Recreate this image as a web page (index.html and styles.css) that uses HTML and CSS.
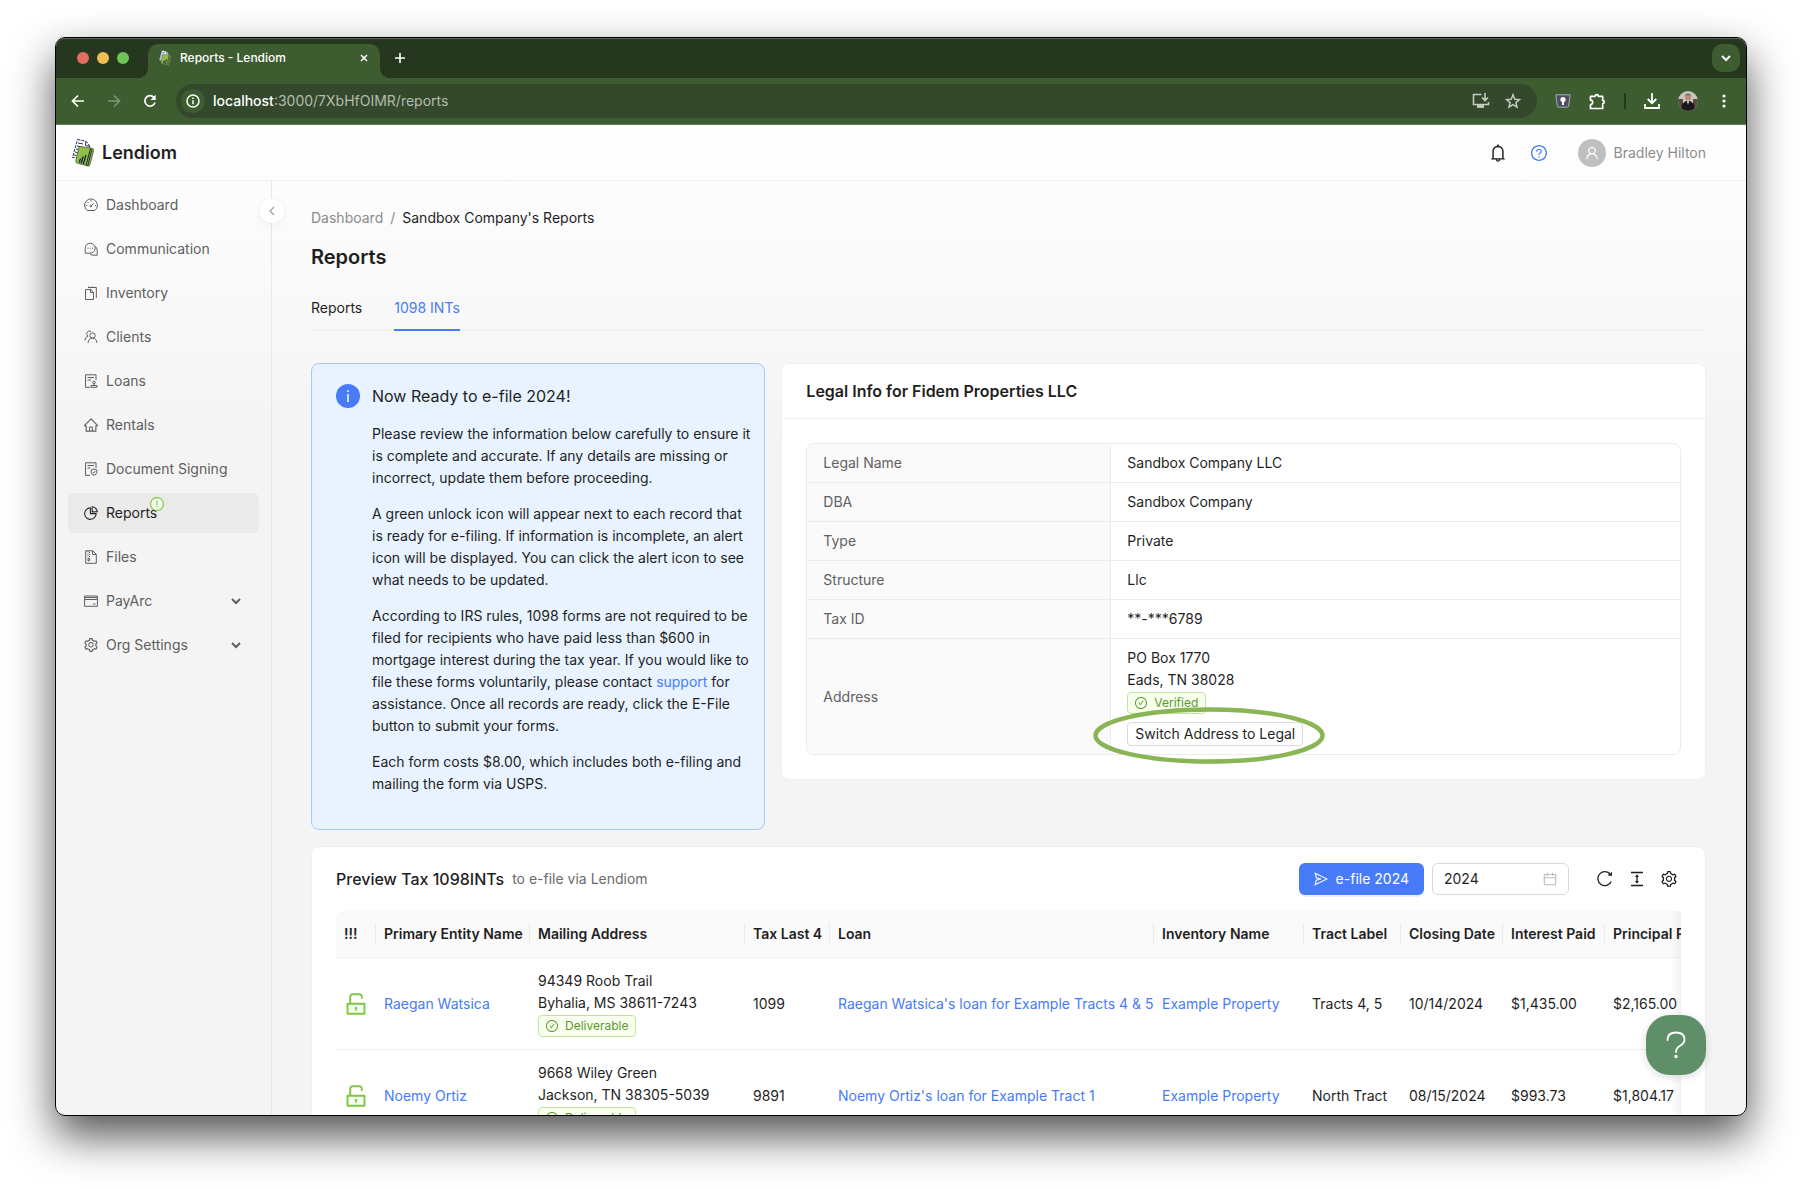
FILE: index.html
```html
<!DOCTYPE html>
<html lang="en">

<head>
  <meta charset="UTF-8">
  <meta name="viewport" content="width=device-width, initial-scale=1.0">
  <title>Reports - Lendiom</title>
  <link rel="stylesheet" href="styles.css">
</head>

<body>
  <!-- shared icons -->
  <svg class="sprite" aria-hidden="true">
    <symbol id="logo" viewBox="0 0 22 28">
      <path d="M5.500.5l9 2 3.500 5-3 12-14.500-1z" fill="#fff" stroke="#2d2f52" stroke-width="1" stroke-dasharray="3 1" />
      <path d="M14 2.500l-.5 4 4.500 1M6 4l5 1M5 7l5 1M4 10l3 .7M3 13l3 .7M2 16l2.500 .5" fill="none" stroke="#2d2f52" stroke-width="1" />
      <path d="M8.500 7.500l12 2q1.500.3 1.200 1.800l-3.700 14.200q-.4 1.800-2 1.500l-11-3q-1.500-.5-1.200-2l3-13q.3-1.700 1.700-1.500z" fill="#8fbf45" stroke="#4b5a3a" stroke-width=".8" />
      <path d="M18.500 9.500L14 26.500M20 10l-4.300 17" stroke="#1d2440" stroke-width="1" />
      <path d="M8.500 19.500l-1.200 4M11.200 17.500l-2 7M14 16l-2.700 9" stroke="#1d2440" stroke-width="1.300" fill="none" />
    </symbol>
    <symbol id="check-circle" viewBox="64 64 896 896">
      <path d="M699 353h-46.9c-10.2 0-19.9 4.9-25.900 13.300L469 584.300l-71.200-98.800c-6-8.300-15.600-13.300-25.900-13.300H325c-6.500 0-10.300 7.400-6.500 12.700l124.600 172.800a31.800 31.800 0 0051.700 0l210.600-292c3.900-5.300.1-12.700-6.400-12.700z" />
      <path d="M512 64C264.600 64 64 264.600 64 512s200.600 448 448 448 448-200.600 448-448S759.400 64 512 64zm0 820c-205.400 0-372-166.600-372-372s166.600-372 372-372 372 166.600 372 372-166.600 372-372 372z" />
    </symbol>
    <symbol id="unlock" viewBox="64 64 896 896">
      <path d="M232 536h560v304H232z" fill="#f6ffed" />
      <path d="M832 464H332V240c0-30.900 25.100-56 56-56h248c30.900 0 56 25.100 56 56v68c0 4.400 3.600 8 8 8h56c4.400 0 8-3.600 8-8v-68c0-70.700-57.300-128-128-128H388c-70.700 0-128 57.300-128 128v224h-68c-17.700 0-32 14.300-32 32v384c0 17.700 14.300 32 32 32h640c17.700 0 32-14.300 32-32V496c0-17.700-14.300-32-32-32zm-40 376H232V536h560v304zM484 701v53c0 4.400 3.600 8 8 8h40c4.400 0 8-3.600 8-8v-53a48.010 48.010 0 10-56 0z" />
    </symbol>
    <symbol id="setting" viewBox="64 64 896 896">
      <path d="M924.8 625.7l-65.5-56c3.1-19 4.7-38.4 4.7-57.8s-1.6-38.8-4.7-57.8l65.5-56a32.03 32.03 0 009.3-35.2l-.9-2.6a443.74 443.74 0 00-79.7-137.9l-1.8-2.1a32.12 32.12 0 00-35.1-9.5l-81.3 28.9c-30-24.6-63.5-44-99.7-57.6l-15.7-85a32.05 32.05 0 00-25.8-25.7l-2.7-.5c-52.1-9.4-106.9-9.4-159 0l-2.7.5a32.05 32.05 0 00-25.8 25.7l-15.8 85.4a351.86 351.86 0 00-99 57.4l-81.9-29.1a32 32 0 00-35.1 9.5l-1.8 2.1a446.02 446.02 0 00-79.7 137.9l-.9 2.6c-4.5 12.5-.8 26.5 9.3 35.2l66.3 56.6c-3.1 18.8-4.6 38-4.6 57.1 0 19.2 1.5 38.4 4.6 57.1L99 625.5a32.03 32.03 0 00-9.3 35.2l.9 2.6c18.1 50.4 44.9 96.9 79.7 137.9l1.8 2.1a32.12 32.12 0 0035.1 9.5l81.9-29.1c29.8 24.5 63.1 43.9 99 57.4l15.8 85.4a32.05 32.05 0 0025.8 25.7l2.7.5a449.4 449.4 0 00159 0l2.7-.5a32.05 32.05 0 0025.8-25.7l15.7-85a350 350 0 0099.7-57.6l81.3 28.9a32 32 0 0035.1-9.5l1.8-2.1c34.8-41.1 61.6-87.5 79.7-137.9l.9-2.6c4.5-12.3.8-26.3-9.3-35zM788.3 465.9c2.5 15.1 3.8 30.6 3.8 46.1s-1.3 31-3.8 46.1l-6.6 40.1 74.7 63.9a370.03 370.03 0 01-42.6 73.6L721 702.8l-31.4 25.8c-23.9 19.6-50.5 35-79.3 45.8l-38.1 14.3-17.9 97a377.5 377.5 0 01-85 0l-17.9-97.2-37.8-14.5c-28.500-10.8-55-26.2-78.7-45.7l-31.4-25.9-93.4 33.2c-17-22.9-31.2-47.6-42.6-73.6l75.5-64.5-6.5-40c-2.4-14.9-3.7-30.3-3.7-45.5 0-15.3 1.2-30.6 3.7-45.5l6.5-40-75.5-64.5c11.3-26.1 25.6-50.7 42.6-73.6l93.4 33.2 31.4-25.9c23.7-19.5 50.2-34.9 78.7-45.7l37.9-14.3 17.9-97.2c28.1-3.2 56.8-3.2 85 0l17.9 97 38.1 14.3c28.7 10.8 55.4 26.2 79.3 45.8l31.4 25.8 92.8-32.9c17 22.9 31.2 47.6 42.6 73.6L781.8 426l6.5 39.9zM512 326c-97.2 0-176 78.8-176 176s78.8 176 176 176 176-78.8 176-176-78.8-176-176-176zm79.200 255.200A111.600 111.600 0 01512 614c-29.900 0-58-11.700-79.200-32.800A111.600 111.600 0 01400 502c0-29.900 11.700-58 32.800-79.200C454 401.600 482.100 390 512 390c29.900 0 58 11.600 79.200 32.800A111.600 111.600 0 01624 502c0 29.900-11.700 58-32.800 79.200z" />
    </symbol>
    <symbol id="chevron" viewBox="0 0 10 10">
      <path d="M1 3l4 4 4-4" fill="none" stroke="currentColor" stroke-width="2" />
    </symbol>
  </svg>

  <div class="window">
    <!-- browser tabs -->
    <div class="tab-strip">
      <div class="lights">
        <span class="light red"></span>
        <span class="light yellow"></span>
        <span class="light green"></span>
      </div>
      <div class="browser-tab">
        <svg class="favicon"><use href="#logo" /></svg>
        <span class="browser-tab-title">Reports - Lendiom</span>
        <button class="chrome-btn" aria-label="Close tab">
          <svg width="8" height="8" viewBox="0 0 8 8"><path d="M1 1l6 6M7 1L1 7" stroke="#fff" stroke-width="1.500" /></svg>
        </button>
      </div>
      <button class="chrome-btn new-tab" aria-label="New tab">
        <svg width="12" height="12" viewBox="0 0 12 12"><path d="M6 1v10M1 6h10" stroke="#fff" stroke-width="1.600" /></svg>
      </button>
      <button class="tab-search" aria-label="Search tabs">
        <svg width="10" height="10"><use href="#chevron" /></svg>
      </button>
    </div>

    <!-- address bar -->
    <div class="toolbar">
      <div class="nav-buttons">
        <button class="chrome-btn" aria-label="Back">
          <svg width="14" height="14" viewBox="0 0 14 14"><path d="M13 7H2M7 1.500L1.500 7 7 12.500" fill="none" stroke="#fff" stroke-width="1.700" /></svg>
        </button>
        <button class="chrome-btn" aria-label="Forward">
          <svg width="14" height="14" viewBox="0 0 14 14"><path d="M1 7h11M7 1.500L12.500 7 7 12.500" fill="none" stroke="#7f9576" stroke-width="1.700" /></svg>
        </button>
        <button class="chrome-btn" aria-label="Reload">
          <svg width="14" height="14" viewBox="0 0 14 14"><path d="M12 8.500A5.200 5.200 0 1 1 11 3.500" fill="none" stroke="#fff" stroke-width="1.700" /><path d="M12.700.8v5.200H7.500z" fill="#fff" /></svg>
        </button>
      </div>
      <div class="omnibox">
        <button class="site-info" aria-label="Site information">
          <svg width="14" height="14" viewBox="0 0 14 14"><circle cx="7" cy="7" r="6" fill="none" stroke="#fff" stroke-width="1.500" /><path d="M7 6.200v4M7 3.500v1.500" stroke="#fff" stroke-width="1.500" /></svg>
        </button>
        <div class="url" role="textbox" contenteditable="true" spellcheck="false" aria-label="Address"><b>localhost</b>:3000/7XbHfOIMR/reports</div>
        <button class="chrome-btn" aria-label="Install app">
          <svg width="18" height="16" viewBox="0 0 18 16"><path d="M9.500 1.500h-8v10h15V9M5 14h7M13 0v7M10 4.500l3 3 3-3" fill="none" stroke="#c3cbbf" stroke-width="1.600" /><path d="M5 12h7v2.500H5z" fill="#c3cbbf" /></svg>
        </button>
        <button class="chrome-btn" aria-label="Bookmark">
          <svg width="16" height="16" viewBox="0 0 16 16"><path d="M8 1.800l1.800 4.400 4.700.4-3.600 3 1.100 4.600L8 11.700l-4 2.500 1.100-4.600-3.600-3 4.700-.4z" fill="none" stroke="#c3cbbf" stroke-width="1.500" /></svg>
        </button>
      </div>
      <div class="extensions">
        <button class="chrome-btn" aria-label="Password manager">
          <svg width="16" height="14" viewBox="0 0 16 14"><path d="M.8.800h14.400l-1.500 11.200q-.2 1.200-1.500 1.200H3.800q-1.300 0-1.500-1.200z" fill="#4b4f5e" stroke="#a9adb8" /><circle cx="8" cy="5.500" r="2.600" fill="#fff" /><path d="M7 6h2v5H7z" fill="#fff" /></svg>
        </button>
        <button class="chrome-btn" aria-label="Extensions">
          <svg width="17" height="17" viewBox="0 0 17 17"><path d="M1.500 3.300h4.700a1.600 1.600 0 0 1 3.200 0h4.300v4.200a1.600 1.600 0 0 1 0 3.200v4.800H1.500v-4a2 2 0 0 0 0-4.400z" fill="none" stroke="#fff" stroke-width="1.700" stroke-linejoin="round" /></svg>
        </button>
        <span class="divider"></span>
        <button class="chrome-btn" aria-label="Downloads">
          <svg width="16" height="16" viewBox="0 0 16 16"><path d="M8 0v10M3.700 6L8 10.200 12.300 6M1 11v4h14v-4" fill="none" stroke="#fff" stroke-width="1.800" /></svg>
        </button>
        <button class="chrome-btn" aria-label="Profile">
          <svg width="20" height="20" viewBox="0 0 20 20">
            <clipPath id="round"><circle cx="10" cy="10" r="10" /></clipPath>
            <g clip-path="url(#round)">
              <path d="M0 0h20v20H0z" fill="#c9c3bd" />
              <path d="M0 8h5v12H0zM15 8h5v12h-5z" fill="#5c4a40" />
              <path d="M3 20l1-7 4-3h4l4 3 1 7z" fill="#17191d" />
              <path d="M9 10h2l-1 4z" fill="#eee" />
              <circle cx="10" cy="6.500" r="3" fill="#b98f7a" />
              <path d="M7 5.500q0-3 3-3t3 3l-1-1H8z" fill="#777" />
            </g>
          </svg>
        </button>
        <button class="chrome-btn browser-menu" aria-label="Menu">
          <svg width="4" height="14" viewBox="0 0 4 14"><circle cx="2" cy="2" r="1.600" fill="#fff" /><circle cx="2" cy="7" r="1.600" fill="#fff" /><circle cx="2" cy="12" r="1.600" fill="#fff" /></svg>
        </button>
      </div>
    </div>

    <!-- app header -->
    <header class="header">
      <a class="brand" href="#">
        <svg width="22" height="28"><use href="#logo" /></svg>
        Lendiom
      </a>
      <div class="header-actions">
        <button class="icon-btn" aria-label="Notifications">
          <svg class="icon-18" viewBox="64 64 896 896"><path d="M816 768h-24V428c0-141.100-104.300-257.700-240-277.100V112c0-22.100-17.900-40-40-40s-40 17.900-40 40v38.900c-135.700 19.400-240 136-240 277.100v340h-24c-17.700 0-32 14.300-32 32v32c0 4.400 3.600 8 8 8h216c0 61.800 50.200 112 112 112s112-50.200 112-112h216c4.400 0 8-3.600 8-8v-32c0-17.700-14.300-32-32-32zM512 888c-26.500 0-48-21.500-48-48h96c0 26.500-21.500 48-48 48zM304 768V428c0-55.600 21.600-107.800 60.900-147.100S456.400 220 512 220c55.600 0 107.800 21.600 147.100 60.900S720 372.400 720 428v340H304z" /></svg>
        </button>
        <button class="icon-btn help" aria-label="Help">
          <svg class="icon-16" viewBox="64 64 896 896"><path d="M512 64C264.600 64 64 264.600 64 512s200.600 448 448 448 448-200.600 448-448S759.400 64 512 64zm0 820c-205.400 0-372-166.600-372-372s166.600-372 372-372 372 166.600 372 372-166.600 372-372 372z" /><path d="M623.600 316.700C593.600 290.400 554 276 512 276s-81.600 14.500-111.600 40.700C369.200 344 352 380.700 352 420v7.600c0 4.400 3.600 8 8 8h48c4.400 0 8-3.600 8-8V420c0-44.100 43.100-80 96-80s96 35.900 96 80c0 31.100-22 59.600-56.100 72.700-21.200 8.100-39.200 22.300-52.100 40.900-13.100 19-19.900 41.800-19.900 64.900V620c0 4.400 3.600 8 8 8h48c4.400 0 8-3.600 8-8v-22.700a48.300 48.300 0 0130.900-44.800c59-22.700 97.100-74.700 97.100-132.500.1-39.300-17.100-76-48.300-103.300zM472 732a40 40 0 1080 0 40 40 0 10-80 0z" /></svg>
        </button>
        <a class="user" href="#">
          <span class="avatar">
            <svg class="icon-14" viewBox="64 64 896 896"><path d="M858.5 763.600a374 374 0 00-80.600-119.500 375.630 375.630 0 00-119.500-80.600c-.4-.2-.8-.3-1.200-.5C719.500 518 760 444.700 760 362c0-137-111-248-248-248S264 225 264 362c0 82.700 40.500 156 102.800 201.100-.4.2-.8.3-1.200.5-44.800 18.900-85 46-119.500 80.600a375.630 375.630 0 00-80.600 119.500A371.700 371.700 0 00136 901.800a8 8 0 008 8.200h60c4.400 0 7.900-3.500 8-7.800 2-77.200 33-149.500 87.800-204.300 56.700-56.700 132-87.900 212.200-87.900s155.500 31.200 212.200 87.900C779 752.700 810 825 812 902.200c.1 4.400 3.600 7.800 8 7.800h60a8 8 0 008-8.200c-1-47.800-10.900-94.300-29.500-138.200zM512 534c-45.900 0-89.100-17.900-121.600-50.400S340 407.900 340 362c0-45.900 17.900-89.100 50.400-121.600S466.100 190 512 190s89.100 17.900 121.600 50.400S684 316.100 684 362c0 45.900-17.900 89.100-50.400 121.600S557.900 534 512 534z" /></svg>
          </span>
          Bradley Hilton
        </a>
      </div>
    </header>

    <div class="layout">
      <!-- sidebar menu -->
      <nav class="sidebar">
        <a class="menu-item" href="#">
          <svg class="icon-line" viewBox="0 0 14 14"><path d="M3.200 12.500A6.400 6.400 0 1 1 10.800 12.500z" /><path d="M7 8l2.700-2.700M7 2.200v1.300M2 7.500h1.200M10.800 7.500H12M3.500 4l.8.8" /><circle cx="6.800" cy="8" r=".8" /></svg>
          Dashboard
        </a>
        <a class="menu-item" href="#">
          <svg class="icon-line" viewBox="0 0 14 14"><path d="M1.200 10.800V6.200a5 5 0 1 1 5 5H1.200zM11 4.300a4.600 4.600 0 0 1 2.200 4v4.900H9a4.500 4.500 0 0 1-3.300-1.600" /><path d="M3.500 6.200h1M5.700 6.200h1M7.900 6.200h1" /></svg>
          Communication
        </a>
        <a class="menu-item" href="#">
          <svg class="icon-line" viewBox="0 0 14 14"><path d="M1.500 3.500h5.300L9.500 6.200v7.300h-8zM6.500 3.500v3h3M4.500 1.500v-1M8.500 1.500v-1M4 1.500h8.300v10.500" /></svg>
          Inventory
        </a>
        <a class="menu-item" href="#">
          <svg class="icon-line" viewBox="0 0 14 14"><circle cx="8.500" cy="5.500" r="2.700" /><path d="M4 13q.5-4.800 4.500-4.800T13 13M7 1.500a2.700 2.700 0 1 0-3 4.700M.8 10.500Q1.200 6.800 4 6.300" /></svg>
          Clients
        </a>
        <a class="menu-item" href="#">
          <svg class="icon-line" viewBox="0 0 14 14"><path d="M6 13.300H1.500V.8h10.500V6M3.500 3.500h6.500M3.500 6h3.500M7 13.300v-1.800h6v1.800zM10 11.500V10" /><circle cx="10" cy="8.500" r="1.300" /></svg>
          Loans
        </a>
        <a class="menu-item" href="#">
          <svg class="icon-14" viewBox="64 64 896 896"><path d="M946.500 505L560.100 118.800l-25.900-25.900a31.500 31.500 0 00-44.400 0L77.500 505a63.900 63.900 0 00-18.800 46c.4 35.200 29.700 63.300 64.900 63.300h42.500V940h691.800V614.300h43.400c17.100 0 33.200-6.700 45.300-18.800a63.600 63.600 0 0018.700-45.300c0-17-6.700-33.100-18.800-45.200zM568 868H456V664h112v204zm217.900-325.700V868H632V640c0-22.100-17.900-40-40-40H432c-22.100 0-40 17.900-40 40v228H238.100V542.300h-96l370-369.700 23.100 23.100L882 542.300h-96.100z" /></svg>
          Rentals
        </a>
        <a class="menu-item" href="#">
          <svg class="icon-line" viewBox="0 0 14 14"><path d="M6 13.300H1.500V.8h10.500V6M3.500 3.500h6.500M3.500 6h3M10 7l2.800 1v2.500q0 1.800-2.800 2.800-2.800-1-2.800-2.800V8z" /><path d="M8.800 10l.9 1 1.600-2" /></svg>
          Document Signing
        </a>
        <a class="menu-item active" href="#">
          <svg class="icon-14" viewBox="64 64 896 896"><path d="M864 518H506V160c0-4.400-3.600-8-8-8h-26a398.460 398.460 0 00-282.800 117.100 398.190 398.190 0 00-85.700 127.100A397.610 397.610 0 0072 552a398.460 398.460 0 00117.100 282.800c36.700 36.700 79.500 65.600 127.100 85.700A397.610 397.610 0 00472 952a398.460 398.460 0 00282.800-117.100c36.700-36.700 65.600-79.500 85.700-127.100A397.610 397.610 0 00872 552v-26c0-4.400-3.600-8-8-8zM705.700 787.800A331.590 331.590 0 01470.400 884c-88.100-.4-170.900-34.900-233.200-97.200C174.500 724.100 140 640.700 140 552c0-88.700 34.500-172.100 97.200-234.800 54.600-54.600 124.900-87.900 200.800-95.500V586h364.300c-7.700 76.300-41.300 147-96.600 201.800zM952 462.400l-2.600-28.200c-8.500-92.100-49.400-179-115.200-244.600A399.400 399.400 0 00589 74.600L560.700 72c-4.700-.4-8.700 3.200-8.700 7.900V464c0 4.400 3.600 8 8 8l384-1c4.700 0 8.400-4 8-8.600zm-332.200-58.200V147.600a332.240 332.240 0 01166.400 89.800c45.700 45.600 77 103.600 90 166.100l-256.400.7z" /></svg>
          <span class="badge-wrap">Reports
            <svg class="badge" viewBox="0 0 14 14"><circle cx="7" cy="7" r="6.400" fill="#f6ffed" stroke="#7cc644" stroke-width="1.100" /><path d="M7 3.500v4.700M7 9.300v1.300" stroke="#7cc644" stroke-width="1.200" /></svg>
          </span>
        </a>
        <a class="menu-item" href="#">
          <svg class="icon-line" viewBox="0 0 14 14"><path d="M1.700.8h7L12.300 4.300v9H1.700zM8.500.8v3.700h3.800" /><path d="M4 1v6.500M5.500 2v6" stroke-dasharray="1 1" /><path d="M4 8.500h1.600v2.300H4z" /></svg>
          Files
        </a>
        <button class="menu-item">
          <svg class="icon-line" viewBox="0 0 14 14"><path d="M.6 2h12.800v10.300H.6zM.6 3.500h12.800M.6 5.500h12.800M9 10h2.500" /></svg>
          PayArc
          <svg class="arrow"><use href="#chevron" /></svg>
        </button>
        <button class="menu-item">
          <svg class="icon-14"><use href="#setting" /></svg>
          Org Settings
          <svg class="arrow"><use href="#chevron" /></svg>
        </button>
        <button class="collapse" aria-label="Collapse menu">
          <svg width="8" height="10" viewBox="0 0 8 10"><path d="M6 1L2 5l4 4" fill="none" stroke="#a0a0a0" stroke-width="1.200" /></svg>
        </button>
      </nav>

      <main class="content">
        <div class="breadcrumb"><a href="#">Dashboard</a><span class="slash">/</span><span class="current">Sandbox Company's Reports</span></div>
        <h1>Reports</h1>
        <div class="tabs" role="tablist">
          <button class="tab" role="tab" aria-selected="false">Reports</button>
          <button class="tab selected" role="tab" aria-selected="true">1098 INTs</button>
        </div>

        <div class="row">
          <!-- e-file notice -->
          <section class="alert">
            <svg class="alert-icon" viewBox="0 0 24 24"><circle cx="12" cy="12" r="12" fill="#477bf8" /><path d="M12 10v8M12 6.200v1.900" stroke="#e8f3ff" stroke-width="1.700" /></svg>
            <div class="alert-body">
              <h2>Now Ready to e-file 2024!</h2>
              <p>Please review the information below carefully to ensure it is complete and accurate. If any details are missing or incorrect, update them before proceeding.</p>
              <p>A green unlock icon will appear next to each record that is ready for e-filing. If information is incomplete, an alert icon will be displayed. You can click the alert icon to see what needs to be updated.</p>
              <p>According to IRS rules, 1098 forms are not required to be filed for recipients who have paid less than $600 in mortgage interest during the tax year. If you would like to file these forms voluntarily, please contact <a href="#">support</a> for assistance. Once all records are ready, click the E-File button to submit your forms.</p>
              <p>Each form costs $8.00, which includes both e-filing and mailing the form via USPS.</p>
            </div>
          </section>

          <!-- legal info -->
          <section class="card legal">
            <h2 class="card-title">Legal Info for Fidem Properties LLC</h2>
            <div class="card-body">
              <table class="descriptions">
                <tr><th scope="row">Legal Name</th><td>Sandbox Company LLC</td></tr>
                <tr><th scope="row">DBA</th><td>Sandbox Company</td></tr>
                <tr><th scope="row">Type</th><td>Private</td></tr>
                <tr><th scope="row">Structure</th><td>Llc</td></tr>
                <tr><th scope="row">Tax ID</th><td>**-***6789</td></tr>
                <tr>
                  <th scope="row">Address</th>
                  <td>
                    PO Box 1770<br>Eads, TN 38028
                    <div class="tag-line"><span class="tag"><svg class="icon-12"><use href="#check-circle" /></svg>Verified</span></div>
                    <div class="switch-wrap">
                      <button class="small-btn">Switch Address to Legal</button>
                      <svg class="highlight" viewBox="0 0 232 57" preserveAspectRatio="none"><ellipse cx="116" cy="28.500" rx="113.500" ry="26" fill="none" stroke="#8ab555" stroke-width="4.500" /></svg>
                    </div>
                  </td>
                </tr>
              </table>
            </div>
          </section>
        </div>

        <!-- 1098 preview table -->
        <section class="card preview">
          <div class="preview-bar">
            <h2>Preview Tax 1098INTs</h2>
            <span class="subtitle">to e-file via Lendiom</span>
            <button class="primary-btn">
              <svg width="14" height="14" viewBox="0 0 14 14"><path d="M1.200 1.200L13 7 1.200 12.800 2.300 8.200 7 7 2.300 5.800z" fill="none" stroke="#fff" stroke-width="1.100" /></svg>
              e-file 2024
            </button>
            <div class="picker">
              <input type="text" value="2024" aria-label="Tax year">
              <svg class="icon-14" viewBox="64 64 896 896"><path d="M880 184H712v-64c0-4.400-3.600-8-8-8h-56c-4.400 0-8 3.600-8 8v64H384v-64c0-4.400-3.600-8-8-8h-56c-4.400 0-8 3.600-8 8v64H144c-17.700 0-32 14.300-32 32v664c0 17.700 14.300 32 32 32h736c17.700 0 32-14.300 32-32V216c0-17.700-14.300-32-32-32zm-40 656H184V460h656v380zM184 392V256h128v48c0 4.400 3.600 8 8 8h56c4.400 0 8-3.600 8-8v-48h256v48c0 4.400 3.600 8 8 8h56c4.400 0 8-3.600 8-8v-48h128v136H184z" /></svg>
            </div>
            <div class="table-tools">
              <button class="icon-btn" aria-label="Reload">
                <svg width="16" height="16" viewBox="0 0 16 16"><path d="M14.300 10.500A7 7 0 1 1 13.500 3.500M14.500 1.300l-.3 3-3-.5" fill="none" stroke="currentColor" stroke-width="1.300" /></svg>
              </button>
              <button class="icon-btn" aria-label="Density">
                <svg width="16" height="16" viewBox="0 0 16 16"><path d="M2 1.500h12M2 14.500h12M8 5v6" stroke="currentColor" stroke-width="1.300" /><path d="M8 3.300L10 6H6zM8 12.700L6 10h4z" fill="currentColor" /></svg>
              </button>
              <button class="icon-btn" aria-label="Column settings">
                <svg class="icon-16"><use href="#setting" /></svg>
              </button>
            </div>
          </div>
          <div class="table-wrap">
            <table class="records">
              <colgroup>
                <col class="w-status"><col class="w-name"><col class="w-address"><col class="w-tax"><col class="w-loan">
                <col class="w-inventory"><col class="w-tract"><col class="w-date"><col class="w-date"><col class="w-principal">
              </colgroup>
              <thead>
                <tr>
                  <th>!!!</th>
                  <th>Primary Entity Name</th>
                  <th>Mailing Address</th>
                  <th>Tax Last 4</th>
                  <th>Loan</th>
                  <th>Inventory Name</th>
                  <th>Tract Label</th>
                  <th>Closing Date</th>
                  <th>Interest Paid</th>
                  <th>Principal Paid</th>
                </tr>
              </thead>
              <tbody>
                <tr>
                  <td><svg class="unlock"><use href="#unlock" /></svg></td>
                  <td><a href="#">Raegan Watsica</a></td>
                  <td>94349 Roob Trail<br>Byhalia, MS 38611-7243<div class="tag-line"><span class="tag"><svg class="icon-12"><use href="#check-circle" /></svg>Deliverable</span></div></td>
                  <td>1099</td>
                  <td><a href="#">Raegan Watsica's loan for Example Tracts 4 &amp; 5</a></td>
                  <td><a href="#">Example Property</a></td>
                  <td>Tracts 4, 5</td>
                  <td>10/14/2024</td>
                  <td>$1,435.00</td>
                  <td>$2,165.00</td>
                </tr>
                <tr>
                  <td><svg class="unlock"><use href="#unlock" /></svg></td>
                  <td><a href="#">Noemy Ortiz</a></td>
                  <td>9668 Wiley Green<br>Jackson, TN 38305-5039<div class="tag-line"><span class="tag"><svg class="icon-12"><use href="#check-circle" /></svg>Deliverable</span></div></td>
                  <td>9891</td>
                  <td><a href="#">Noemy Ortiz's loan for Example Tract 1</a></td>
                  <td><a href="#">Example Property</a></td>
                  <td>North Tract</td>
                  <td>08/15/2024</td>
                  <td>$993.73</td>
                  <td>$1,804.17</td>
                </tr>
              </tbody>
            </table>
          </div>
        </section>
      </main>
    </div>

    <button class="help-fab" aria-label="Support">
      <svg width="20" height="28" viewBox="0 0 20 28"><path d="M1.500 9Q1.500 1.500 10 1.500T18.500 8.500Q18.500 12 14.500 14.500 10 17 10 21" fill="none" stroke="#fff" stroke-width="1.800" stroke-linecap="round" /><circle cx="10" cy="25.500" r="1.700" fill="#fff" /></svg>
    </button>
  </div>
</body>

</html>
```

FILE: styles.css
```css
* {
  box-sizing: border-box;
}

body {
  margin: 0;
  height: 100vh;
  padding: 37px 55px 73px;
  background: #fff;
  color: #1f1f1f;
  font-family: Inter, "Liberation Sans", sans-serif;
  font-size: 14px;
  line-height: 22px;
}

h1,
h2,
p {
  margin: 0;
}

button {
  padding: 0;
  border: none;
  background: none;
  color: inherit;
  font: inherit;
  cursor: pointer;
}

a {
  color: #477bf8;
  text-decoration: none;
}

svg {
  display: block;
  flex: none;
  fill: currentColor;
}

.sprite {
  position: absolute;
  width: 0;
  height: 0;
}

.icon-12 {
  width: 12px;
  height: 12px;
}

.icon-14,
.icon-line {
  width: 14px;
  height: 14px;
}

.icon-16 {
  width: 16px;
  height: 16px;
}

.icon-18 {
  width: 18px;
  height: 18px;
}

.icon-line {
  fill: none;
  stroke: currentColor;
  stroke-width: 1;
}

/* window */
.window {
  position: relative;
  display: flex;
  flex-direction: column;
  height: 100%;
  border: 1px solid #000;
  border-radius: 10px;
  background: linear-gradient(#fff 80px, #f4f4f4 400px);
  box-shadow: 0 20px 44px rgba(0, 0, 0, 0.68);
  overflow: hidden;
}

.tab-strip {
  display: flex;
  align-items: center;
  flex: none;
  height: 40px;
  padding: 0 6px 0 21px;
  background: #26371f;
  box-shadow: inset 0 1px #5b6856;
}

.lights {
  display: flex;
  gap: 8px;
}

.light {
  width: 12px;
  height: 12px;
  border-radius: 50%;
}

.red {
  background: #e36d5f;
}

.yellow {
  background: #f0be50;
}

.green {
  background: #6fc556;
}

.browser-tab {
  position: relative;
  display: flex;
  align-items: center;
  align-self: flex-end;
  gap: 8px;
  width: 232px;
  height: 34px;
  margin-left: 19px;
  padding: 0 12px 6px 10px;
  border-radius: 10px 10px 0 0;
  background: #3d5c30;
  color: #fff;
  font-size: 12px;
  font-weight: 500;
}

/* curved feet of the active tab */
.browser-tab::before,
.browser-tab::after {
  content: "";
  position: absolute;
  bottom: 0;
  width: 10px;
  height: 10px;
}

.browser-tab::before {
  right: 100%;
  background: radial-gradient(circle at 0 0, transparent 10px, #3d5c30 10px);
}

.browser-tab::after {
  left: 100%;
  background: radial-gradient(circle at 100% 0, transparent 10px, #3d5c30 10px);
}

.favicon {
  width: 14px;
  height: 16px;
}

.browser-tab-title {
  flex: 1;
}

.chrome-btn {
  display: flex;
  align-items: center;
  justify-content: center;
}

.new-tab {
  margin-left: 14px;
}

.tab-search {
  display: flex;
  align-items: center;
  justify-content: center;
  width: 28px;
  height: 28px;
  margin-left: auto;
  border-radius: 10px;
  background: #3d5c30;
  color: #fff;
}

.toolbar {
  display: flex;
  align-items: center;
  flex: none;
  height: 47px;
  padding: 0 14px 0 15px;
  border-bottom: 1px solid #66805c;
  background: #3d5c30;
}

.nav-buttons {
  display: flex;
  gap: 22px;
  margin-right: 19px;
}

.omnibox {
  display: flex;
  align-items: center;
  flex: 1;
  gap: 15px;
  height: 34px;
  padding: 0 16px 0 5px;
  border-radius: 17px;
  background: #34482c;
}

.site-info {
  display: flex;
  align-items: center;
  justify-content: center;
  width: 24px;
  height: 24px;
  border-radius: 50%;
  background: #3d5c30;
}

.url {
  flex: 1;
  margin-left: -7px;
  color: #b3bbae;
  outline: none;
}

.url b {
  color: #fff;
  font-weight: 500;
}

.extensions {
  display: flex;
  align-items: center;
  gap: 18px;
  margin-left: 18px;
}

.browser-menu {
  width: 16px;
}

.divider {
  width: 2px;
  height: 16px;
  background: #26371f;
}

/* app header */
.header {
  display: flex;
  align-items: center;
  justify-content: space-between;
  flex: none;
  height: 56px;
  padding: 0 40px 0 16px;
  border-bottom: 1px solid #eee;
}

.brand {
  display: flex;
  align-items: center;
  gap: 8px;
  color: #1f1f1f;
  font-size: 18px;
  font-weight: 600;
}

.header-actions {
  display: flex;
  align-items: center;
  gap: 17px;
}

.icon-btn {
  display: flex;
  align-items: center;
  justify-content: center;
  width: 24px;
  height: 24px;
}

.help {
  color: #477bf8;
}

.user {
  display: flex;
  align-items: center;
  gap: 8px;
  margin-left: 10px;
  color: #8c8c8c;
}

.avatar {
  display: flex;
  align-items: center;
  justify-content: center;
  width: 28px;
  height: 28px;
  border-radius: 50%;
  background: #bfbfbf;
  color: #fff;
}

.layout {
  display: flex;
  flex: 1;
  min-height: 0;
}

/* sidebar */
.sidebar {
  position: relative;
  display: flex;
  flex-direction: column;
  flex: none;
  gap: 4px;
  width: 216px;
  padding: 4px 12px;
  border-right: 1px solid #e8e8e8;
}

.menu-item {
  display: flex;
  align-items: center;
  gap: 8px;
  height: 40px;
  padding: 0 16px;
  border-radius: 6px;
  color: #5e5e5e;
}

.menu-item.active {
  background: #eaeaea;
  color: #1f1f1f;
}

.badge-wrap {
  position: relative;
}

.badge {
  position: absolute;
  top: -5px;
  right: -7px;
  width: 14px;
  height: 14px;
}

.arrow {
  width: 10px;
  height: 10px;
  margin: 0 2px 0 auto;
}

.collapse {
  position: absolute;
  top: 18px;
  right: -13px;
  display: flex;
  align-items: center;
  justify-content: center;
  width: 24px;
  height: 24px;
  border-radius: 50%;
  background: #fff;
  box-shadow: 0 2px 8px rgba(0, 0, 0, 0.06);
}

/* content */
.content {
  flex: 1;
  min-width: 0;
  padding: 26px 40px 0 39px;
  overflow: hidden;
}

.breadcrumb a,
.slash {
  color: #8c8c8c;
}

.slash {
  margin: 0 7px;
}

h1 {
  margin: 12px 0;
  font-size: 20px;
  font-weight: 600;
  line-height: 32px;
}

.tabs {
  display: flex;
  gap: 32px;
  box-shadow: inset 0 -1px #ececec;
}

.tab {
  height: 46px;
}

.tab.selected {
  border-bottom: 2px solid #477bf8;
  border-top: 2px solid transparent;
  color: #477bf8;
}

.row {
  display: grid;
  grid-template-columns: repeat(3, minmax(0, 1fr));
  align-items: start;
  gap: 16px;
  margin: 32px 0 16px;
}

.alert {
  display: flex;
  gap: 12px;
  padding: 20px 11px 20px 24px;
  border: 1px solid #a3cbfa;
  border-radius: 8px;
  background: #e8f3ff;
}

.alert-icon {
  width: 24px;
  height: 24px;
}

.alert-body h2 {
  margin-bottom: 14px;
  font-size: 16px;
  font-weight: 400;
  line-height: 25px;
}

.alert-body p {
  margin-bottom: 14px;
}

.card {
  border: 1px solid #f0f0f0;
  border-radius: 8px;
  background: #fff;
}

.legal {
  grid-column: span 2;
}

.card-title {
  padding: 0 24px;
  border-bottom: 1px solid #f0f0f0;
  font-size: 16px;
  font-weight: 600;
  line-height: 54px;
}

.card-body {
  padding: 24px;
}

.descriptions {
  width: 100%;
  border: 1px solid #ececec;
  border-radius: 8px;
  border-spacing: 0;
  table-layout: fixed;
}

.descriptions th,
.descriptions td {
  padding: 8px 16px;
  border-bottom: 1px solid #ececec;
  text-align: left;
}

.descriptions th {
  width: 304px;
  border-right: 1px solid #ececec;
  background: #fafafa;
  color: #616161;
  font-weight: 400;
}

.descriptions tr:first-child th {
  border-top-left-radius: 7px;
}

.descriptions tr:last-child th {
  border-bottom-left-radius: 7px;
}

.descriptions tr:last-child th,
.descriptions tr:last-child td {
  border-bottom: none;
}

.tag-line {
  display: flex;
  padding-top: 1px;
}

.tag {
  display: flex;
  align-items: center;
  gap: 7px;
  height: 22px;
  padding: 0 7px;
  border: 1px solid #bfe69a;
  border-radius: 4px;
  background: #f8ffee;
  color: #5a9a2b;
  font-size: 12px;
}

.switch-wrap {
  position: relative;
  display: inline-block;
  margin-top: 8px;
  vertical-align: top;
}

.small-btn {
  display: block;
  height: 24px;
  padding: 0 7px;
  border: 1px solid #d9d9d9;
  border-radius: 4px;
  background: #fff;
}

/* marker drawn round the switch button */
.highlight {
  position: absolute;
  top: -15px;
  left: -34px;
  width: 232px;
  height: 57px;
  pointer-events: none;
}

/* preview table */
.preview {
  padding: 16px 24px;
}

.preview-bar {
  display: flex;
  align-items: center;
  gap: 8px;
  margin-bottom: 16px;
}

.preview-bar h2 {
  font-size: 16px;
  font-weight: 500;
}

.subtitle {
  flex: 1;
  color: #6b6b6b;
}

.primary-btn {
  display: flex;
  align-items: center;
  gap: 8px;
  height: 32px;
  padding: 0 15px;
  border-radius: 6px;
  background: #477bf8;
  box-shadow: 0 2px #e6f0ff;
  color: #fff;
}

.picker {
  display: flex;
  align-items: center;
  width: 137px;
  height: 32px;
  padding: 0 11px;
  border: 1px solid #d9d9d9;
  border-radius: 6px;
  color: #bfbfbf;
}

.picker input {
  flex: 1;
  min-width: 0;
  padding: 0;
  border: none;
  background: none;
  color: #1f1f1f;
  font: inherit;
  outline: none;
}

.table-tools {
  display: flex;
  gap: 8px;
  margin-left: 16px;
}

.table-wrap {
  position: relative;
  border-radius: 8px 0 0 0;
  overflow: hidden;
}

.table-wrap::after {
  content: "";
  position: absolute;
  top: 0;
  right: 0;
  bottom: 0;
  width: 10px;
  background: linear-gradient(to left, rgba(5, 5, 5, 0.05), transparent);
}

.records {
  width: 1392px;
  border-spacing: 0;
  table-layout: fixed;
  white-space: nowrap;
}

.records th,
.records td {
  padding: 12px 8px;
  border-bottom: 1px solid #f0f0f0;
  text-align: left;
}

.records th {
  position: relative;
  background: #fafafa;
  font-weight: 600;
}

.records th:not(:last-child)::after {
  content: "";
  position: absolute;
  top: 12px;
  right: 0;
  bottom: 12px;
  width: 1px;
  background: #ececec;
}

.w-status {
  width: 40px;
}

.w-name {
  width: 154px;
}

.w-address {
  width: 215px;
}

.w-tax {
  width: 85px;
}

.w-loan {
  width: 324px;
}

.w-inventory {
  width: 150px;
}

.w-tract {
  width: 97px;
}

.w-date {
  width: 102px;
}

.w-principal {
  width: 123px;
}

.unlock {
  width: 24px;
  height: 24px;
  color: #7cc644;
}

.help-fab {
  position: absolute;
  right: 40px;
  bottom: 40px;
  display: flex;
  align-items: center;
  justify-content: center;
  width: 60px;
  height: 60px;
  border-radius: 24px;
  background: #5f8f69;
  box-shadow: 0 2px 8px rgba(0, 0, 0, 0.15);
}
```
